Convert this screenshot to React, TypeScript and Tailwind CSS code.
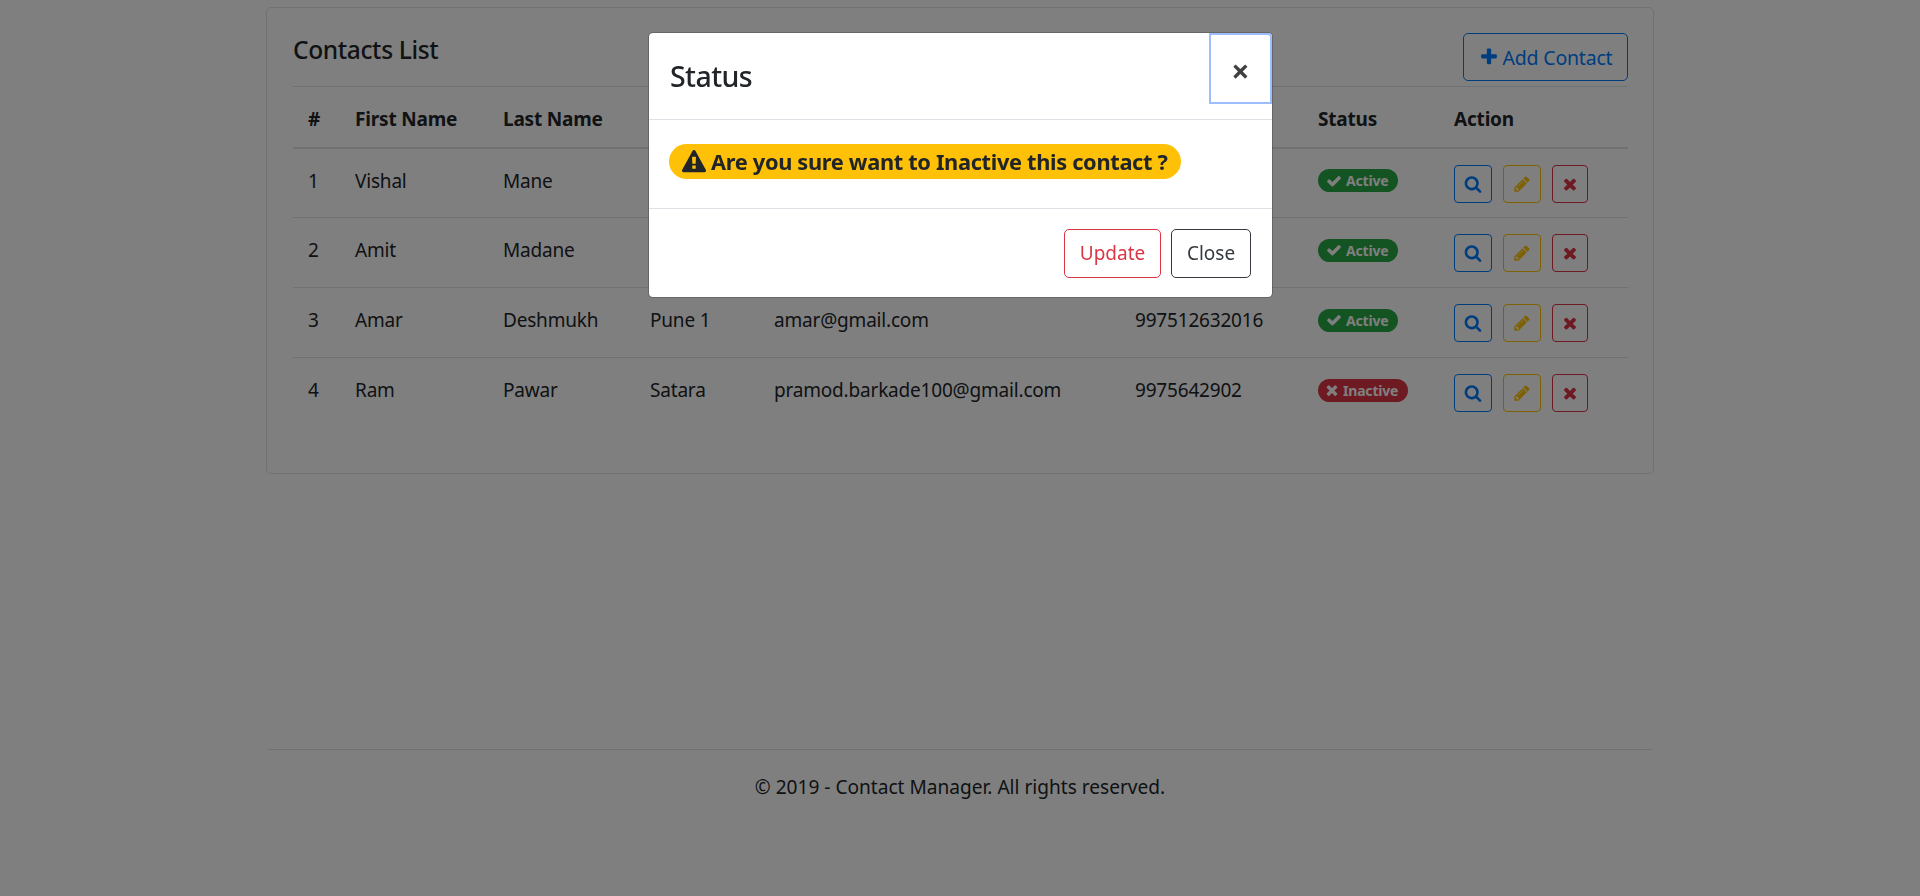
interface Contact {
  id: number;
  firstName: string;
  lastName: string;
  city: string;
  email: string;
  phone: string;
  active: boolean;
}

const contacts: Contact[] = [
  { id: 1, firstName: "Vishal", lastName: "Mane", city: "Pune", email: "vishal@gmail.com", phone: "9975126320", active: true },
  { id: 2, firstName: "Amit", lastName: "Madane", city: "Pune", email: "amit@gmail.com", phone: "9975126321", active: true },
  { id: 3, firstName: "Amar", lastName: "Deshmukh", city: "Pune 1", email: "amar@gmail.com", phone: "997512632016", active: true },
  { id: 4, firstName: "Ram", lastName: "Pawar", city: "Satara", email: "pramod.barkade100@gmail.com", phone: "9975642902", active: false },
];

// font awesome 4 glyphs
const icons = {
  check: "M1671 566q0 40-28 68l-724 724-136 136q-28 28-68 28t-68-28l-136-136-362-362q-28-28-28-68t28-68l136-136q28-28 68-28t68 28l294 295 656-657q28-28 68-28t68 28l136 136q28 28 28 68z",
  times: "M1490 1322q0 40-28 68l-136 136q-28 28-68 28t-68-28l-294-294-294 294q-28 28-68 28t-68-28l-136-136q-28-28-28-68t28-68l294-294-294-294q-28-28-28-68t28-68l136-136q28-28 68-28t68 28l294 294 294-294q28-28 68-28t68 28l136 136q28 28 28 68t-28 68l-294 294 294 294q28 28 28 68z",
  pencil: "M491 1536l91-91-235-235-91 91v107h128v128h107zm523-928q0-22-22-22-10 0-17 7l-542 542q-7 7-7 17 0 22 22 22 10 0 17-7l542-542q7-7 7-17zm-54-192l416 416-832 832h-416v-416zm683 96q0 53-37 90l-166 166-416-416 166-165q36-38 90-38 53 0 91 38l235 234q37 39 37 91z",
  plus: "M1600 736v192q0 40-28 68t-68 28h-416v416q0 40-28 68t-68 28h-192q-40 0-68-28t-28-68v-416h-416q-40 0-68-28t-28-68v-192q0-40 28-68t68-28h416v-416q0-40 28-68t68-28h192q40 0 68 28t28 68v416h416q40 0 68 28t28 68z",
  search: "M1216 832q0-185-131.500-316.500t-316.500-131.500-316.500 131.500-131.500 316.500 131.500 316.500 316.500 131.500 316.500-131.500 131.500-316.500zm512 832q0 52-38 90t-90 38q-54 0-90-38l-343-342q-179 124-399 124-143 0-273.500-55.500t-225-150-150-225-55.500-273.500 55.500-273.500 150-225 225-150 273.500-55.500 273.500 55.500 225 150 150 225 55.500 273.500q0 220-124 399l343 343q37 37 37 90z",
  warning: "M1024 1375v-190q0-14-9.500-23.500t-22.500-9.500h-192q-13 0-22.500 9.500t-9.500 23.500v190q0 14 9.500 23.500t22.500 9.500h192q13 0 22.500-9.500t9.500-23.500zm-2-374l18-459q0-12-10-19-13-11-24-11h-220q-11 0-24 11-10 7-10 21l17 457q0 10 10 16.500t24 6.500h185q14 0 23.500-6.500t10.500-16.500zm-14-934l768 1408q35 63-2 126-17 29-46.500 46t-63.500 17h-1536q-34 0-63.500-17t-46.500-46q-37-63-2-126l768-1408q17-31 47-49t65-18 65 18 47 49z",
};

const Icon = ({ name, className }: { name: keyof typeof icons; className: string }) => (
  <svg viewBox="0 0 1792 1792" fill="currentColor" className={className}>
    <path d={icons[name]} />
  </svg>
);

const StatusBadge = ({ active }: { active: boolean }) => {
  if (active) {
    return (
      <span className="inline-flex h-[23px] items-center gap-[4px] rounded-full bg-[#28a745] pl-[8px] pr-[10px] text-[14px] font-bold text-white">
        <Icon name="check" className="h-[16px] w-[16px]" />
        Active
      </span>
    );
  }
  return (
    <span className="inline-flex h-[23px] items-center gap-[3px] rounded-full bg-[#dc3545] pl-[6px] pr-[10px] text-[14px] font-bold text-white">
      <Icon name="times" className="h-[16px] w-[16px]" />
      Inactive
    </span>
  );
};

const ContactRow = ({ contact }: { contact: Contact }) => (
  <tr className="border-b border-[#dee2e6] last:border-b-0">
    <td className="h-[70px] px-[15px] align-top pt-[19px]">{contact.id}</td>
    <td className="px-[15px] align-top pt-[19px]">{contact.firstName}</td>
    <td className="px-[15px] align-top pt-[19px]">{contact.lastName}</td>
    <td className="px-[15px] align-top pt-[19px]">{contact.city}</td>
    <td className="px-[15px] align-top pt-[19px]">{contact.email}</td>
    <td className="px-[15px] align-top pt-[19px]">{contact.phone}</td>
    <td className="px-[15px] align-top pt-[20px]">
      <StatusBadge active={contact.active} />
    </td>
    <td className="px-[15px] align-top pt-[16px]">
      <div className="flex gap-[11px]">
        <button type="button" className="flex h-[38px] w-[38px] items-center justify-center rounded-[4px] border border-[#007bff] text-[#007bff]">
          <Icon name="search" className="h-[18px] w-[18px]" />
        </button>
        <button type="button" className="flex h-[38px] w-[38px] items-center justify-center rounded-[4px] border border-[#ffc107] text-[#ffc107]">
          <Icon name="pencil" className="h-[18px] w-[18px]" />
        </button>
        <button type="button" className="flex h-[38px] w-[36px] items-center justify-center rounded-[4px] border border-[#dc3545] text-[#dc3545]">
          <Icon name="times" className="h-[18px] w-[18px]" />
        </button>
      </div>
    </td>
  </tr>
);

export default function App() {
  return (
    <div className="min-h-[896px] bg-white font-['Noto_Sans','Open_Sans',sans-serif] text-[19px] leading-[27px] text-[#212529]">
      <div className="mx-auto w-[1388px] pt-[7px]">
        <div className="h-[467px] rounded-[5px] border border-[#dee2e6] pl-[26px] pr-[25px] pt-[25px]">
          <div className="flex h-[53px] items-start justify-between">
            <h4 className="text-[24.5px] font-medium leading-[33px] tracking-[-0.015em]">Contacts List</h4>
            <button type="button" className="flex h-[48px] w-[165px] items-center justify-center gap-[4px] rounded-[5px] border border-[#007bff] text-[19.5px] tracking-[-0.01em] text-[#007bff]">
              <Icon name="plus" className="h-[20px] w-[20px]" />
              Add Contact
            </button>
          </div>
          <table className="w-full table-fixed border-t border-[#dee2e6] tracking-[-0.01em]">
            <colgroup>
              <col className="w-[47px]" />
              <col className="w-[148px]" />
              <col className="w-[147px]" />
              <col className="w-[124px]" />
              <col className="w-[361px]" />
              <col className="w-[183px]" />
              <col className="w-[136px]" />
              <col className="w-[189px]" />
            </colgroup>
            <thead>
              <tr className="border-b-2 border-[#dee2e6] text-left font-bold">
                <th className="h-[61px] px-[15px] pt-[5px]">#</th>
                <th className="px-[15px] pt-[5px]">First Name</th>
                <th className="px-[15px] pt-[5px]">Last Name</th>
                <th className="px-[15px] pt-[5px]">City</th>
                <th className="px-[15px] pt-[5px]">Email</th>
                <th className="px-[15px] pt-[5px]">Phone</th>
                <th className="px-[15px] pt-[5px]">Status</th>
                <th className="px-[15px] pt-[5px]">Action</th>
              </tr>
            </thead>
            <tbody>
              {contacts.map((contact) => (
                <ContactRow key={contact.id} contact={contact} />
              ))}
            </tbody>
          </table>
        </div>
        <footer className="mx-px mt-[275px] border-t border-[#dee2e6] pt-[24px] text-center text-[19.1px]">
          © 2019 - Contact Manager. All rights reserved.
        </footer>
      </div>

      <div className="fixed inset-0 bg-black/50" />
      <div className="fixed left-[648px] top-[32px] h-[266px] w-[625px] rounded-[5px] border border-black/20 bg-white bg-clip-padding">
        <div className="flex h-[87px] items-start justify-between border-b border-[#dee2e6]">
          <h5 className="pl-[21px] pt-[22px] text-[28.5px] font-medium leading-[42px] tracking-[-0.02em]">Status</h5>
          <button type="button" className="flex h-[71px] w-[63px] items-center justify-center rounded-tr-[4px] border-2 border-[#9dbdff] pt-[4px] text-[32px] font-bold text-black/75">
            ×
          </button>
        </div>
        <div className="h-[89px] border-b border-[#dee2e6] pl-[20px] pt-[24px]">
          <span className="inline-flex h-[35px] items-center gap-[5px] rounded-full bg-[#ffc107] pl-[13px] pr-[13px] text-[21.8px] font-bold tracking-[-0.015em]">
            <Icon name="warning" className="h-[24px] w-[24px]" />
            Are you sure want to Inactive this contact ?
          </span>
        </div>
        <div className="flex justify-end gap-[10px] pr-[21px] pt-[20px]">
          <button type="button" className="h-[49px] w-[97px] rounded-[5px] border border-[#dc3545] text-[#dc3545]">Update</button>
          <button type="button" className="h-[49px] w-[80px] rounded-[5px] border border-[#343a40] text-[#343a40]">Close</button>
        </div>
      </div>
    </div>
  );
}
